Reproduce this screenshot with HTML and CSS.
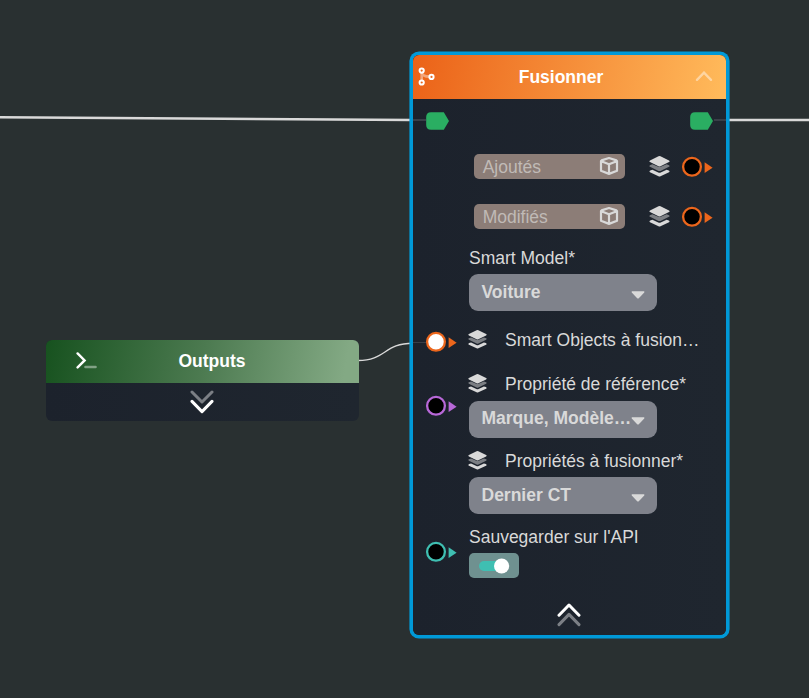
FILE: index.html
```html
<!DOCTYPE html>
<html lang="fr">
<head>
<meta charset="utf-8">
<title>Fusionner</title>
<link rel="stylesheet" href="styles.css">
</head>
<body>
<svg width="0" height="0" class="defs" aria-hidden="true">
  <symbol id="layers" viewBox="0 0 21 21">
    <path class="dim" d="M1 9.2 L3.4 8.3 L9.3 10.8 Q10.5 11.2 11.7 10.8 L17.6 8.3 L20 9.2 Q21.2 10 20 10.8 L11.5 14.9 Q10.5 15.3 9.5 14.9 L1 10.8 Q-.2 10 1 9.2Z"/>
    <path d="M9.5 .3 Q10.5 -.1 11.5 .3 L20 4.4 Q21.2 5.2 20 6 L11.5 10.2 Q10.5 10.6 9.5 10.2 L1 6 Q-.2 5.2 1 4.4Z"/>
    <path d="M1.2 14.4 L3.4 13.7 L9.3 16.5 Q10.5 17 11.7 16.5 L17.6 13.7 L19.8 14.4 Q21.2 15.3 20 16.2 L11.5 20.3 Q10.5 20.7 9.5 20.3 L1 16.2 Q-.2 15.3 1.2 14.4Z"/>
  </symbol>
  <symbol id="port" viewBox="0 0 32 22">
    <circle cx="11" cy="10.8" r="8.9"/>
    <path d="M23.6 6.3 L31.6 11.7 L23.6 17Z"/>
  </symbol>
  <symbol id="flow" viewBox="0 0 24 18">
    <path d="M5 .2 H17.8 L23 9 L17.8 17.8 H5 Q.2 17.8 .2 13 V5 Q.2 .2 5 .2Z"/>
  </symbol>
  <symbol id="cube" viewBox="0 0 20 20">
    <path d="M2 5 Q2 4.6 2.5 4.4 L10 2 L17.5 4.4 Q18 4.6 18 5 V14.8 L10 17.9 L2 14.8Z M2.3 5.2 L10 8.2 L17.7 5.2 M10 8.2 V17.6"/>
  </symbol>
  <symbol id="caret" viewBox="0 0 14 8">
    <path d="M1.2 .2 H12.8 Q14 .5 13.2 1.5 L7.8 7.2 Q7 7.9 6.2 7.2 L.8 1.5 Q0 .5 1.2 .2Z"/>
  </symbol>
</svg>

<main class="canvas">
  <svg class="wires" viewBox="0 0 809 698">
    <path class="wire thick" d="M0 117.2 C160 117.2 260 120.1 412 120.1 M727 120.1 H809"/>
    <path class="wire" d="M358 360.5 C386 360.5 384 343.2 413 343.2"/>
  </svg>

  <section class="node outputs">
    <header class="node-head green">
      <svg class="prompt" width="22" height="18" viewBox="0 0 22 18"><path d="M2.6 1.4 L9.6 8.4 L2.6 15.4"/><path class="faint" d="M10.4 15 H20.6"/></svg>
      <h2>Outputs</h2>
    </header>
    <div class="fold">
      <svg width="24" height="24" viewBox="0 0 24 24"><path class="faint" d="M2 2 L12 12 L22 2"/><path d="M2 11.4 L12 21.6 L22 11.4"/></svg>
    </div>
  </section>

  <section class="node fusion">
    <header class="node-head orange">
      <svg class="merge" width="18" height="20" viewBox="0 0 18 20"><path class="faint" d="M3.7 6 V13.5 M4 6.5 Q5 9.4 11 9.6"/><circle cx="3.7" cy="3.6" r="2.1"/><circle cx="3.7" cy="15.5" r="2.1"/><circle cx="13.5" cy="9.9" r="2.1"/></svg>
      <h2>Fusionner</h2>
      <svg class="collapse" width="18" height="12" viewBox="0 0 18 12"><path d="M2 8.9 L9 1.6 L16 8.9"/></svg>
    </header>

    <div class="flow-row">
      <span class="stub in"></span>
      <svg class="flow" width="24" height="18"><use href="#flow"/></svg>
      <svg class="flow out" width="24" height="18"><use href="#flow"/></svg>
      <span class="stub out"></span>
    </div>

    <div class="result">
      <div class="pill"><span>Ajoutés</span><svg class="cube" width="20" height="20"><use href="#cube"/></svg></div>
      <svg class="layers" width="21" height="21"><use href="#layers"/></svg>
      <svg class="port c-orange" width="32" height="22"><use href="#port"/></svg>
    </div>
    <div class="result">
      <div class="pill"><span>Modifiés</span><svg class="cube" width="20" height="20"><use href="#cube"/></svg></div>
      <svg class="layers" width="21" height="21"><use href="#layers"/></svg>
      <svg class="port c-orange" width="32" height="22"><use href="#port"/></svg>
    </div>

    <div class="field model">
      <div class="side"></div>
      <div class="content">
        <div class="label">Smart Model*</div>
        <div class="select"><span>Voiture</span><svg width="14" height="8"><use href="#caret"/></svg></div>
      </div>
    </div>
    <div class="field objects">
      <div class="side"><span class="stub thin"></span><svg class="port c-orange linked" width="32" height="22"><use href="#port"/></svg></div>
      <div class="content">
        <div class="label"><svg class="layers" width="19" height="19"><use href="#layers"/></svg><span>Smart Objects à fusion…</span></div>
      </div>
    </div>
    <div class="field reference">
      <div class="side"><svg class="port c-purple" width="32" height="22"><use href="#port"/></svg></div>
      <div class="content">
        <div class="label"><svg class="layers" width="19" height="19"><use href="#layers"/></svg><span>Propriété de référence*</span></div>
        <div class="select"><span>Marque, Modèle…</span><svg width="14" height="8"><use href="#caret"/></svg></div>
      </div>
    </div>
    <div class="field merged">
      <div class="side"></div>
      <div class="content">
        <div class="label"><svg class="layers" width="19" height="19"><use href="#layers"/></svg><span>Propriétés à fusionner*</span></div>
        <div class="select"><span>Dernier CT</span><svg width="14" height="8"><use href="#caret"/></svg></div>
      </div>
    </div>
    <div class="field save">
      <div class="side"><svg class="port c-teal" width="32" height="22"><use href="#port"/></svg></div>
      <div class="content">
        <div class="label">Sauvegarder sur l'API</div>
        <div class="toggle"><svg width="32" height="16" viewBox="0 0 32 16"><rect class="track" x="1" y="3" width="24" height="10" rx="5"/><circle cx="23.6" cy="8" r="7.6"/></svg></div>
      </div>
    </div>
    <div class="fold">
      <svg width="24" height="24" viewBox="0 0 24 24"><path d="M2 12.2 L12 2 L22 12.2"/><path class="faint" d="M2 21.6 L12 11.4 L22 21.6"/></svg>
    </div>
  </section>
</main>
</body>
</html>
```

FILE: styles.css
```css
* { box-sizing: border-box; }

body {
  margin: 0;
  background: #293031;
  color: #d9d9d9;
  font: 17.5px/20px "Liberation Sans", Arial, sans-serif;
}

svg { display: block; flex: none; }
.defs { position: absolute; }

.canvas {
  position: relative;
  width: 809px;
  height: 698px;
  overflow: hidden;
}

.wires { position: absolute; inset: 0; }
.wire { fill: none; stroke: #d9d9d9; stroke-width: 1.4; }
.wire.thick { stroke-width: 2.5; }

/* Nodes, placed freely on the canvas */
.node {
  position: absolute;
  background: linear-gradient(90deg, #1c222c, #1f262f);
  border-radius: 6px;
}
.outputs { left: 46.3px; top: 339.5px; width: 312.7px; height: 81px; }
.fusion {
  left: 413px;
  top: 55px;
  width: 313px;
  height: 580px;
  box-shadow: 0 0 0 3.6px #0099d8;
}

.node-head {
  display: flex;
  align-items: center;
  height: 44px;
  border-radius: 6px 6px 0 0;
  color: #fff;
}
.node-head h2 { margin: 0; font: inherit; font-weight: bold; }
.green { background: linear-gradient(100deg, #17521f, #4c7a50 50%, #83a984 95%); padding-left: 29px; }
.green h2 { margin-left: 81.2px; }
.orange { background: linear-gradient(100deg, #eb6218, #f58c38 48%, #ffb95a 98%); padding-left: 5px; }
.orange h2 { margin-left: 82.7px; }
.outputs .node-head { height: 43.5px; }

.prompt, .merge, .collapse, .fold svg {
  fill: none;
  stroke: #fff;
  stroke-width: 2.4;
  stroke-linecap: round;
}
.faint { opacity: .42; }
.merge { stroke-width: 2; }
.merge .faint { stroke-width: 2.6; stroke-linecap: butt; }
.collapse { margin-left: auto; margin-right: 13.5px; margin-top: -1px; opacity: .45; stroke-width: 2.3; }
.fold { display: flex; justify-content: center; }
.fold svg { margin-left: -1px; stroke-width: 3; stroke-linejoin: round; }
.outputs .fold { padding-top: 7px; }

.flow-row { display: flex; align-items: center; height: 18px; margin-top: 13px; }
.flow { fill: #2aae62; }
.flow.out { margin-left: auto; }
.stub { width: 13px; height: 2px; margin-top: -2px; background: #393f48; }
.stub.out { width: 12px; }

.result {
  display: flex;
  align-items: center;
  height: 25px;
  margin: 24px 13px 25px 61px;
}
.result + .result { margin-top: 25.4px; margin-bottom: 0; }
.pill {
  display: flex;
  align-items: center;
  justify-content: space-between;
  width: 150.5px;
  height: 25px;
  padding: 0 5.5px 0 8.7px;
  border-radius: 5px;
  background: #8c7d77;
  color: #c0bab6;
}
.cube { margin-top: -1px; fill: none; stroke: #d9d9d9; stroke-width: 2.2; stroke-linejoin: round; }
.layers { fill: #d9d9d9; }
.dim { opacity: .5; }
.result .layers { margin-left: 24.5px; }
.result .port { margin-left: auto; }

.port { fill: currentColor; }
.port, #port { overflow: visible; }
#port circle { fill: var(--core, #000); stroke: currentColor; stroke-width: 2.3; }
.c-orange { color: #ec661c; }
.c-purple { color: #b868d8; }
.c-teal { color: #3fbfb2; }
.linked { --core: #fff; }

.field { display: flex; align-items: center; }
.side { display: flex; align-items: center; width: 56px; }
.side .port { margin-left: 11.5px; margin-top: -1px; }
.side .stub { width: 13px; height: 1px; margin: 0 -13px 0 0; }
.label { display: flex; align-items: center; height: 20px; white-space: nowrap; }
.label .layers { margin: -1px 17.6px 0 -.6px; }

.select {
  display: flex;
  align-items: center;
  justify-content: space-between;
  width: 188px;
  height: 37.3px;
  margin-top: 6.5px;
  padding: 0 12px 2px 12.5px;
  border-radius: 9px;
  background: #7f828b;
  font-weight: bold;
  white-space: nowrap;
}
.select svg { fill: #d9d9d9; margin-top: 6px; }

.model { margin-top: 18.3px; }
.objects { height: 22px; margin-top: 18px; }
.objects .side { padding-top: 5px; }
.objects .label { margin-top: -1px; }
.reference { margin-top: 22.8px; }
.merged { margin-top: 12.5px; }
.field .label + .toggle { margin-top: 6.7px; }
.save { margin-top: 12.2px; }

.toggle {
  display: flex;
  align-items: center;
  width: 50px;
  height: 25px;
  padding-left: 9px;
  border-radius: 5px;
  background: #6f9190;
}
.toggle circle { fill: #fff; }
.toggle .track { fill: #3fbfb2; }
.fusion .fold { margin-top: 25px; }
```
